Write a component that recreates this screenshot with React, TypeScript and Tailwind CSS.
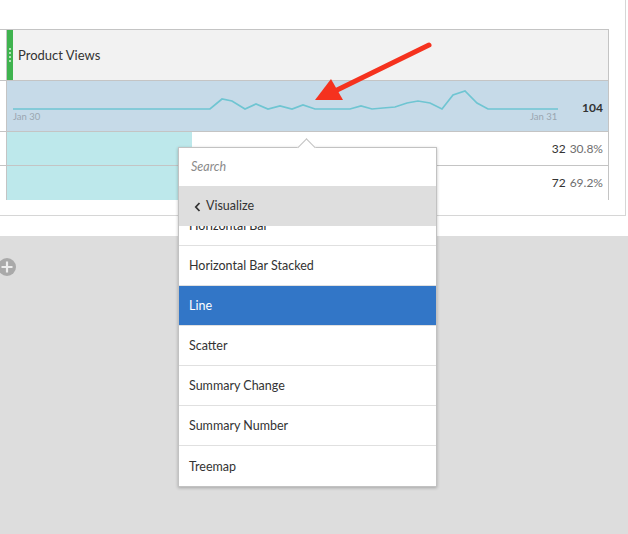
import React from "react";

const sparkPoints =
  "13,109 210,109 222,99 232,101 245,109 256,104 268,109 280,106 292,109 303,105 315,109 325,109 350,109 361,106 372,109 383,108 395,107 407,103 418,101 430,103 442,109 453,95 465,91 477,103 488,109 558,109";

const vizItems = ["Horizontal Bar Stacked", "Line", "Scatter", "Summary Change", "Summary Number", "Treemap"];

const rows = [
  { value: "32", pct: "30.8%" },
  { value: "72", pct: "69.2%" },
];

export default function App() {
  return (
    <div
      className="relative w-[628px] h-[534px] overflow-hidden bg-[#dddddd] text-[#2c2c2c]"
      style={{ fontFamily: "Lato, 'Open Sans', sans-serif" }}
    >
      {/* Freeform panel */}
      <div className="h-[236px] bg-white">
        <div className="w-[626px] h-[216px] border-r border-b border-[#d6d6d6] pt-[29px]">
          <div className="w-[609px] border-t border-r border-[#c4c4c4]">
            {/* header */}
            <div className="flex h-[51px] border-b border-[#c4c4c4] bg-[#f2f2f2]">
              <div className="w-[7px] border-r border-[#c4c4c4] bg-white" />
              <div className="relative w-[6px] bg-[#3fb34f] flex flex-col items-center justify-center gap-[2px]">
                <span className="w-[2px] h-[2px] rounded-full bg-white/80" />
                <span className="w-[2px] h-[2px] rounded-full bg-white/80" />
                <span className="w-[2px] h-[2px] rounded-full bg-white/80" />
                <span className="w-[2px] h-[2px] rounded-full bg-white/80" />
              </div>
              <div className="flex items-center pl-[5px] pt-[2px] text-[13px] text-[#333]">Product Views</div>
            </div>
            {/* sparkline row */}
            <div className="flex h-[51px] border-b border-[#c4c4c4]">
              <div className="w-[7px] border-r border-[#c4c4c4] bg-white" />
              <div className="relative flex-1 bg-[#c6dae8]">
                <div className="absolute left-[6px] top-[29px] text-[9.5px] text-[#9aa6b0]">Jan 30</div>
                <div className="absolute left-[523px] top-[29px] text-[9.5px] text-[#9aa6b0]">Jan 31</div>
                <div className="absolute right-[5px] top-[18px] text-[12px] font-bold text-[#333]">104</div>
              </div>
            </div>
            {rows.map((r, i) => (
              <div key={i} className="flex h-[34px] border-b border-[#c4c4c4] last:border-b-0">
                <div className="w-[7px] border-r border-[#c4c4c4] bg-white" />
                <div className="w-[185px] bg-[#bde8eb]" />
                <div className="flex-1 flex items-center justify-end pr-[5px] gap-[4px] text-[12px]">
                  <span className="text-[#333]">{r.value}</span>
                  <span className="text-[#6e6e6e]">{r.pct}</span>
                </div>
              </div>
            ))}
          </div>
        </div>
      </div>

      {/* add icon */}
      <div className="absolute -left-[2px] top-[258px] w-[18px] h-[18px] rounded-full bg-[#a9a9a9] flex items-center justify-center">
        <svg width="12" height="12" viewBox="0 0 12 12">
          <path d="M6 0.5v11M0.5 6h11" stroke="#ededed" strokeWidth="2.2" />
        </svg>
      </div>

      {/* sparkline + arrow overlay */}
      <svg className="absolute left-0 top-0 pointer-events-none" width="628" height="534">
        <polyline points={sparkPoints} fill="none" stroke="#6fc5d2" strokeWidth="1.7" />
        <line x1="429" y1="45" x2="333" y2="92" stroke="#f5321e" strokeWidth="5" strokeLinecap="round" />
        <polygon points="315,100 331,79 343,100" fill="#f5321e" />
      </svg>

      {/* visualize popover */}
      <div className="absolute left-[178px] top-[147px] w-[259px] h-[340px] border border-[#c2c2c2] bg-white shadow-[0_1px_3px_rgba(0,0,0,0.25)]">
        <div className="absolute left-[121px] -top-[7px] w-[13px] h-[13px] rotate-45 border-l border-t border-[#c2c2c2] bg-white" />
        <div className="relative flex flex-col h-full overflow-hidden">
          <div className="h-[38px] flex items-center pl-[12px] pt-[2px] text-[12.5px] italic text-[#8a8a8a]">Search</div>
          <div className="relative z-10 h-[41px] flex items-center pl-[15px] pt-[2px] gap-[5px] bg-[#dedede] text-[12.5px] text-[#333]">
            <svg width="7" height="10" viewBox="0 0 7 10">
              <path d="M5.5 1L1.8 5l3.7 4" fill="none" stroke="#333" strokeWidth="1.8" />
            </svg>
            Visualize
          </div>
          <div className="-mt-[20px]">
            <div className="h-[40px] flex items-center pl-[10px] pt-[2px] border-b border-[#e0e0e0] text-[12.5px]">Horizontal Bar</div>
            {vizItems.map((item) => (
              <div
                key={item}
                className={
                  item === "Line"
                    ? "h-[40px] flex items-center pl-[10px] pt-[2px] border-b border-[#e0e0e0] bg-[#3276c7] text-[12.5px] text-white"
                    : "h-[40px] flex items-center pl-[10px] pt-[2px] border-b border-[#e0e0e0] last:border-b-0 text-[12.5px] text-[#333]"
                }
              >
                {item}
              </div>
            ))}
          </div>
        </div>
      </div>
    </div>
  );
}
